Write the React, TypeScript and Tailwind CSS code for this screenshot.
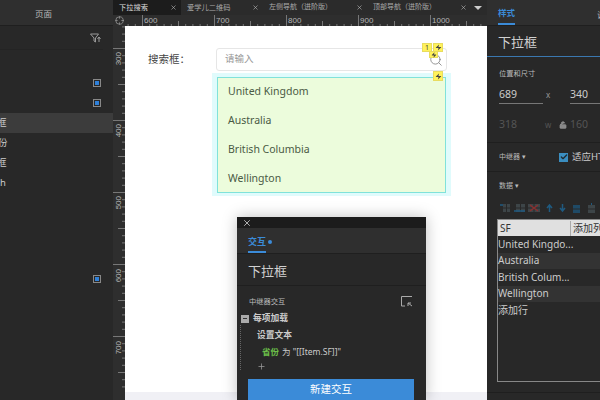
import { Check, Crosshair, LockOpen, Plus, Search, X, Zap } from "lucide-react";

const CJK = "font-['Noto_Sans','Noto_Sans_CJK_SC',sans-serif]";

const tabs = [
	{ label: "下拉搜索", width: "w-[68px]", text: "text-[7.25px]", active: true },
	{ label: "爱学儿二维码", width: "w-[82px]", text: "text-[7.25px]", active: false },
	{ label: "左侧导航（进阶版）", width: "w-[104px]", text: "text-[7px]", active: false },
	{ label: "顶部导航（进阶版）", width: "w-[104px]", text: "text-[7px]", active: false },
];

const hLabels = [
	{ text: "600", x: 29 },
	{ text: "700", x: 101 },
	{ text: "800", x: 173 },
	{ text: "900", x: 245 },
	{ text: "1000", x: 317 },
];
const vLabels = [
	{ text: "300", y: 22 },
	{ text: "400", y: 94 },
	{ text: "500", y: 166 },
	{ text: "600", y: 239 },
	{ text: "700", y: 311 },
];
const steps = Array.from({ length: 52 }, (_, i) => i);

function HRuler() {
	return (
		<div className="relative h-[11px] flex-none overflow-hidden bg-[#2e2e2e]">
			<svg className="absolute inset-0" width="374" height="11">
				{steps.map((i) => {
					const x = 29.5 + (i - 4) * 7.2;
					const major = (i - 4) % 10 === 0;
					const mid = (i - 4) % 5 === 0;
					return (
						<line key={i} x1={x} x2={x} y1={major ? 0 : mid ? 6 : 9} y2={11} stroke="#777" strokeWidth="1" />
					);
				})}
			</svg>
			{hLabels.map((l) => (
				<span
					key={l.text}
					className="absolute top-0 font-['Liberation_Sans',sans-serif] text-[8px] leading-[11px] text-[#b5b5b5]"
					style={{ left: l.x + 2 }}
				>
					{l.text}
				</span>
			))}
			<div className="absolute left-0 top-0 flex h-[11px] w-[12px] items-center justify-center bg-[#2e2e2e]">
				<Crosshair size={9} className="text-[#999]" />
			</div>
		</div>
	);
}

function VRuler() {
	return (
		<div className="relative w-[12px] flex-none overflow-hidden bg-[#2e2e2e]">
			<svg className="absolute inset-0" width="12" height="374">
				{steps.map((i) => {
					const y = 22.5 + (i - 4) * 7.2;
					const major = (i - 4) % 10 === 0;
					const mid = (i - 4) % 5 === 0;
					return (
						<line key={i} x1={major ? 0 : mid ? 5 : 9} x2={12} y1={y} y2={y} stroke="#777" strokeWidth="1" />
					);
				})}
			</svg>
			{vLabels.map((l) => (
				<span
					key={l.text}
					className="absolute left-[1px] font-['Liberation_Sans',sans-serif] text-[8px] leading-[10px] text-[#b5b5b5] [writing-mode:vertical-rl] rotate-180"
					style={{ top: l.y + 4 }}
				>
					{l.text}
				</span>
			))}
		</div>
	);
}

function Badge({ className, children }: { className: string; children: React.ReactNode }) {
	return (
		<div
			className={`absolute flex items-center justify-center border border-[#e8dc60] bg-[#fff25a] text-[7px] leading-none text-[#444] ${className}`}
		>
			{children}
		</div>
	);
}

function Canvas() {
	return (
		<div className={`relative flex-1 bg-white ${CJK}`}>
			<span className="absolute left-[23px] top-[24px] text-[10.5px] leading-[18px] text-[#444]">搜索框：</span>
			<div className="absolute left-[91px] top-[22px] flex h-[23px] w-[231px] items-center rounded-[3px] border border-[#e6e6e6] bg-white pl-[8px]">
				<span className="text-[9.5px] text-[#999]">请输入</span>
			</div>
			<Search size={14} strokeWidth={1.5} className="absolute left-[304px] top-[27px] text-[#888]" />
			<Badge className="left-[297px] top-[17px] h-[9px] w-[10px]">1</Badge>
			<Badge className="left-[308px] top-[17px] h-[9px] w-[10px]">
				<Zap size={7} fill="#444" strokeWidth={0} />
			</Badge>
			<Badge className="left-[304px] top-[25px] h-[7px] w-[9px]">
				<Zap size={6} fill="#444" strokeWidth={0} />
			</Badge>
			<div className="absolute left-[87px] top-[47px] h-[123px] w-[239px] bg-[#e0fbfc] pl-[5px] pt-[4px]">
				<div className="flex h-[116px] w-[229px] flex-col border border-[#80e2da] bg-[#ecfcdc] pl-[10px]">
					<div className="-mt-[1px] flex flex-col">
						{["United Kingdom", "Australia", "British Columbia", "Wellington"].map((item) => (
							<div key={item} className="flex h-[29px] items-center text-[10.5px] text-[#4a5a44]">
								{item}
							</div>
						))}
					</div>
				</div>
			</div>
			<Badge className="left-[308px] top-[45px] h-[10px] w-[10px]">
				<Zap size={7} fill="#444" strokeWidth={0} />
			</Badge>
		</div>
	);
}

function InteractionDialog() {
	return (
		<div className={`absolute left-[237px] top-[217px] flex h-[183px] w-[189px] flex-col bg-[#282828] shadow-[0_0_14px_rgba(0,0,0,0.25)] ${CJK}`}>
			<div className="flex h-[11px] flex-none items-center bg-[#1c1c1c] pl-[5px]">
				<X size={10} className="text-[#ccc]" />
			</div>
			<div className="flex h-[26px] flex-none items-end border-b border-[#1f1f1f] bg-[#2f2f2f] pl-[11px]">
				<div className="flex h-[25px] items-center border-b-2 border-[#3b8bd8] pt-[4px] text-[9px] font-bold text-[#3b8bd8]">交互</div>
				<div className="mb-[9px] ml-[2px] h-[4px] w-[4px] rounded-full bg-[#3b8bd8]" />
			</div>
			<div className="flex h-[32px] flex-none items-center border-b border-[#1f1f1f] pl-[11px] pt-[4px] text-[13px] text-[#d0d0d0]">
				下拉框
			</div>
			<div className="flex h-[24px] flex-none items-center justify-between pl-[12px] pr-[13px] pt-[6px] text-[7.25px] text-[#bbb]">
				<span>中继器交互</span>
				<svg width="12" height="11" viewBox="0 0 12 11" fill="none" stroke="#aaa">
					<path d="M11 0.5H0.5V10H4" />
					<path d="M7 7l4 3M7 10V7h3" />
				</svg>
			</div>
			<div className="relative flex-1">
				<div className="absolute left-[3px] top-[15px] h-[45px] border-l border-dotted border-[#666]" />
				<div className="flex h-[17px] items-center gap-[4px] pl-[4px] text-[8.75px] font-bold text-[#ccc]">
					<div className="flex h-[8px] w-[8px] items-center justify-center bg-[#aaa]">
						<div className="h-px w-[4px] bg-[#333]" />
					</div>
					每项加载
				</div>
				<div className="flex h-[17px] items-center pl-[20px] text-[8.75px] font-bold text-[#ccc]">设置文本</div>
				<div className="flex h-[16px] items-center pl-[25px] text-[8.5px] text-[#ccc]">
					<span className="font-bold text-[#6cc04a]">省份</span>
					<span className="ml-[3px]">为 "[[Item.SF]]"</span>
				</div>
				<div className="pl-[20px]">
					<Plus size={9} className="mt-[2px] text-[#999]" />
				</div>
			</div>
			<div className="ml-[11px] flex h-[21px] w-[166px] flex-none items-center justify-center bg-[#3b8bd8] text-[10.5px] text-white">
				新建交互
			</div>
		</div>
	);
}

function PagesPanel() {
	return (
		<div className={`flex w-[113px] flex-none flex-col overflow-hidden bg-[#282828] ${CJK}`}>
			<div className="flex h-[26px] flex-none items-center justify-center border-b border-[#1f1f1f] bg-[#2f2f2f] pr-[26px] pt-[4px] text-[8.5px] text-[#b8b8b8]">
				页面
			</div>
			<div className="mr-[10px] flex h-[24px] flex-none items-center justify-end border-b border-[#242424] pr-[2px]">
				<svg width="11" height="10" viewBox="0 0 11 10" fill="none" stroke="#999">
					<path d="M0.5 1h8L5.5 5v4L4 8V5z" />
					<path d="M9 4v5M7.5 6L9 4l1.5 2" />
				</svg>
			</div>
			<div className="h-[23px] flex-none" />
			<div className="flex h-[20px] flex-none items-center justify-end pr-[12px]">
				<Marker />
			</div>
			<div className="flex h-[20px] flex-none items-center justify-end pr-[12px]">
				<Marker />
			</div>
			<div className="flex h-[20px] flex-none items-center bg-[#3c3c3c] text-[9.5px] text-[#ccc]">
				<span className="-ml-[22px]">下拉框</span>
			</div>
			<div className="flex h-[20px] flex-none items-center text-[9.5px] text-[#ccc]">
				<span className="-ml-[2px]">份</span>
			</div>
			<div className="flex h-[20px] flex-none items-center text-[9.5px] text-[#ccc]">
				<span className="-ml-[22px]">搜索框</span>
			</div>
			<div className="flex h-[20px] flex-none items-center text-[9.5px] text-[#ccc]">
				<span>h</span>
			</div>
			<div className="mt-[76px] flex h-[20px] flex-none items-center justify-end pr-[12px]">
				<Marker />
			</div>
		</div>
	);
}

function Marker() {
	return (
		<div className="flex h-[8px] w-[8px] items-center justify-center border border-[#888] bg-[#282828]">
			<div className="h-[4px] w-[4px] bg-[#2f80d8]" />
		</div>
	);
}

function GridIcon({ x, width }: { x: number; width: number }) {
	return (
		<g>
			<rect x={x} y="1" width={width} height="8" fill="#3d4548" />
			<path d={`M${x} 5h${width}M${x + width / 2} 1v8`} stroke="#282828" strokeWidth="1" />
		</g>
	);
}

function TableToolbar() {
	return (
		<svg width="100" height="10" viewBox="0 0 100 10" className="ml-[13px] flex-none" fill="none">
			<GridIcon x={3} width={7} />
			<path d="M0 2h3" stroke="#1f5a80" strokeWidth="1.5" />
			<GridIcon x={16} width={9} />
			<path d="M14 8h11" stroke="#1f5a80" strokeWidth="1.5" />
			<GridIcon x={28} width={12} />
			<path d="M30 2l8 6M38 2l-8 6" stroke="#8a3030" strokeWidth="1.5" />
			<path d="M49.5 9V3M47 5l2.5-3 2.5 3" stroke="#1f5a80" strokeWidth="1.5" />
			<path d="M62.5 1v6M60 5l2.5 3 2.5-3" stroke="#1f5a80" strokeWidth="1.5" />
			<rect x="73" y="2" width="7" height="8" fill="#1f4a66" />
			<path d="M76.5 0v2M73 6h7" stroke="#2a2a2a" />
			<rect x="88" y="2" width="7" height="8" fill="#3d4548" />
			<path d="M91.5 0v2" stroke="#1f5a80" />
			<path d="M88 6h7" stroke="#282828" />
		</svg>
	);
}

function StylePanel() {
	return (
		<div className={`flex w-[113px] flex-none flex-col overflow-hidden bg-[#282828] ${CJK}`}>
			<div className="flex h-[26px] flex-none items-end justify-between border-b border-[#1f1f1f] bg-[#2f2f2f] pl-[11px]">
				<div className="flex h-[25px] items-center border-b-2 border-[#3b8bd8] pt-[4px] text-[8.5px] font-bold text-[#3b8bd8]">样式</div>
				<span className="-mr-[14px] mb-[3px] text-[8.5px] text-[#bbb]">说明</span>
			</div>
			<div className="flex h-[31px] flex-none items-center border-b border-[#3b78b0] pl-[11px] pt-[3px] text-[13px] text-[#d0d0d0]">
				下拉框
			</div>
			<div className="flex h-[86px] flex-none flex-col border-b border-[#1f1f1f] pl-[12px]">
				<span className="mt-[10px] text-[7.25px] leading-[13px] text-[#bbb]">位置和尺寸</span>
				<div className="mt-[6px] flex items-center text-[10.5px] text-[#ccc]">
					<span className="w-[44px] flex-none border-b border-[#777] pb-[1px] leading-[16px]">689</span>
					<span className="w-[27px] flex-none pl-[3px] text-[8px] text-[#999]">x</span>
					<span className="w-[44px] flex-none border-b border-[#777] pb-[1px] leading-[16px]">340</span>
				</div>
				<div className="mt-[13px] flex items-center text-[10.5px] text-[#555]">
					<span className="w-[44px] flex-none">318</span>
					<span className="w-[13px] flex-none pl-[2px] text-[8px]">w</span>
					<LockOpen size={8} fill="#888" className="w-[14px] flex-none text-[#999]" />
					<span>160</span>
				</div>
			</div>
			<div className="flex h-[29px] flex-none items-center border-b border-[#1f1f1f] pl-[12px] text-[7px] text-[#bbb]">
				<span className="w-[60px] flex-none whitespace-nowrap">中继器 ▾</span>
				<div className="flex h-[9px] w-[9px] flex-none items-center justify-center bg-[#3b8ec0]">
					<Check size={8} strokeWidth={4} className="text-[#1f2a30]" />
				</div>
				<span className="ml-[4px] whitespace-nowrap text-[9.5px] text-[#ccc]">适应HTML内容</span>
			</div>
			<div className="flex h-[28px] flex-none items-center pl-[12px] text-[7px] text-[#bbb]">数据 ▾</div>
			<div className="flex h-[16px] flex-none items-center">
				<TableToolbar />
			</div>
			<div className="ml-[10px] mt-[3px] flex h-[163px] w-[140px] flex-none flex-col border border-[#888] text-[10px] text-[#ccc]">
				<div className="flex h-[16px] flex-none items-center bg-[#e0e0e0] text-[#333]">
					<span className="w-[73px] flex-none border-r border-[#aaa] pl-[2px]">SF</span>
					<span className="pl-[2px]">添加列</span>
				</div>
				{["United Kingdo...", "Australia", "British Colum...", "Wellington"].map((row, i) => (
					<div key={row} className={`flex h-[16.5px] flex-none items-center ${i % 2 === 1 ? "bg-[#333]" : ""}`}>
						{row}
					</div>
				))}
				<div className="flex h-[16.5px] flex-none items-center">添加行</div>
			</div>
			<div className="mt-[10px] flex-1 border-t border-[#1f1f1f]" />
		</div>
	);
}

export default function App() {
	return (
		<div className="relative flex h-[400px] w-[600px] overflow-hidden bg-[#282828]">
			<PagesPanel />
			<div className="flex w-[374px] flex-none flex-col">
				<div className={`flex h-[15px] flex-none bg-[#2b2b2b] ${CJK}`}>
					{tabs.map((tab) => (
						<div
							key={tab.label}
							className={`flex flex-none items-center justify-between pl-[6px] pr-[4px] ${tab.text} ${tab.width} ${tab.active ? "bg-[#1c1c1c] text-[#ddd]" : "text-[#aaa]"}`}
						>
							<span className="whitespace-nowrap">{tab.label}</span>
							<X size={7} className="text-[#bbb]" />
						</div>
					))}
					<div className="mt-[6px] ml-[3px] h-0 w-0 border-x-[4px] border-t-[4px] border-x-transparent border-t-[#ccc]" />
				</div>
				<HRuler />
				<div className="flex min-h-0 flex-1">
					<VRuler />
					<div className="flex flex-1 flex-col">
						<Canvas />
						<div className="h-[8px] flex-none bg-[#f0f0f5]" />
					</div>
				</div>
			</div>
			<StylePanel />
			<InteractionDialog />
		</div>
	);
}
